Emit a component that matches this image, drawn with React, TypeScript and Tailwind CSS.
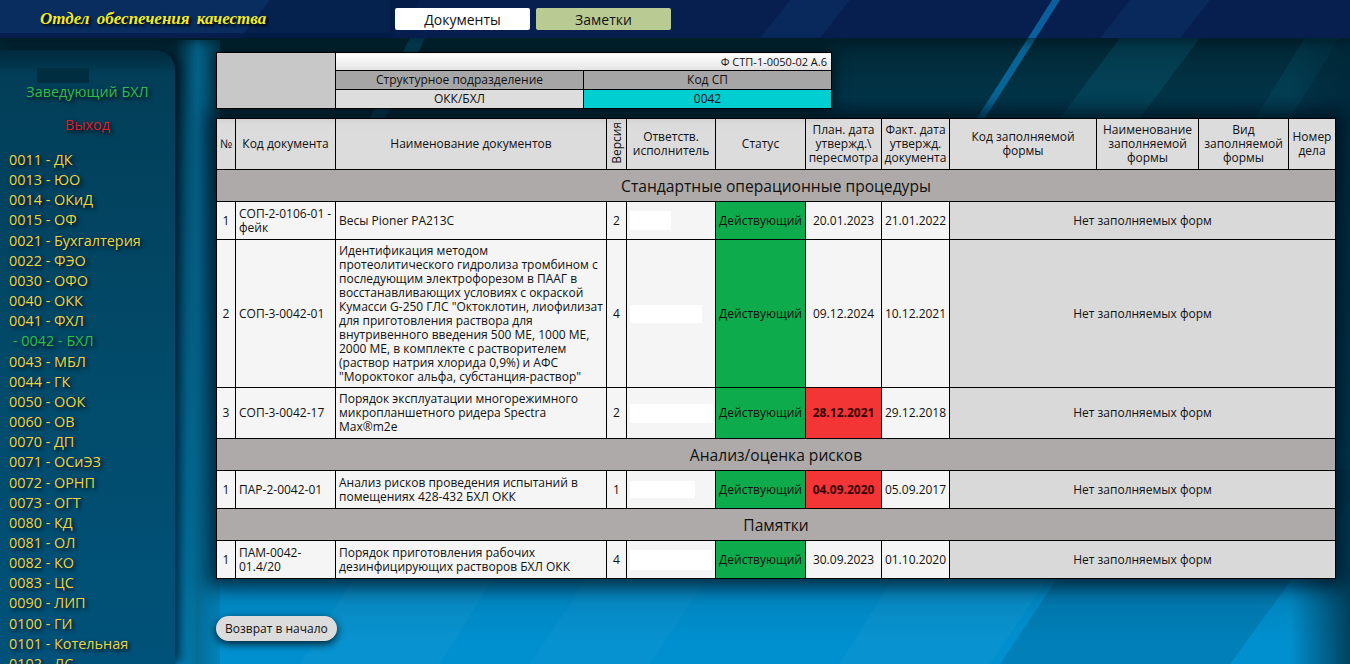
const menu = [
  "0011 - ДК", "0013 - ЮО", "0014 - ОКиД", "0015 - ОФ", "0021 - Бухгалтерия", "0022 - ФЭО", "0030 - ОФО",
  "0040 - ОКК", "0041 - ФХЛ", "- 0042 - БХЛ", "0043 - МБЛ", "0044 - ГК", "0050 - ООК", "0060 - ОВ", "0070 - ДП",
  "0071 - ОСиЭЗ", "0072 - ОРНП", "0073 - ОГТ", "0080 - КД", "0081 - ОЛ", "0082 - КО", "0083 - ЦС", "0090 - ЛИП",
  "0100 - ГИ", "0101 - Котельная", "0102 - ЛС",
];

const colWidths = [19, 100, 271, 20, 89, 90, 76, 68, 147, 102, 90, 47];

const headers = [
  "№", "Код документа", "Наименование документов", "", "Ответств. исполнитель", "Статус",
  "План. дата утвержд.\\ пересмотра", "Факт. дата утвержд. документа", "Код заполняемой формы",
  "Наименование заполняемой формы", "Вид заполняемой формы", "Номер дела",
];

type Doc = {
  num: number;
  code: string;
  name: string;
  ver: number;
  blank: string;
  plan: string;
  fact: string;
  late?: boolean;
  h: string;
};

const sections: { title: string; bold?: boolean; docs: Doc[] }[] = [
  {
    title: "Стандартные операционные процедуры",
    docs: [
      { num: 1, code: "СОП-2-0106-01 - фейк", name: "Весы Pioner PA213C", ver: 2, blank: "w-[41px] h-[19px]", plan: "20.01.2023", fact: "21.01.2022", h: "h-[38px]" },
      {
        num: 2,
        code: "СОП-3-0042-01",
        name: 'Идентификация методом протеолитического гидролиза тромбином с последующим электрофорезом в ПААГ в восстанавливающих условиях с окраской Кумасси G-250 ГЛС "Октоклотин, лиофилизат для приготовления раствора для внутривенного введения 500 МЕ, 1000 МЕ, 2000 МЕ, в комплекте с растворителем (раствор натрия хлорида 0,9%) и АФС "Мороктоког альфа, субстанция-раствор"',
        ver: 4,
        blank: "w-[72px] h-[18px]",
        plan: "09.12.2024",
        fact: "10.12.2021",
        h: "h-[148px]",
      },
      { num: 3, code: "СОП-3-0042-17", name: "Порядок эксплуатации многорежимного микропланшетного ридера Spectra Max®m2e", ver: 2, blank: "w-[83px] h-[19px]", plan: "28.12.2021", fact: "29.12.2018", late: true, h: "h-[51px]" },
    ],
  },
  {
    title: "Анализ/оценка рисков",
    bold: true,
    docs: [
      { num: 1, code: "ПАР-2-0042-01", name: "Анализ рисков проведения испытаний в помещениях 428-432 БХЛ ОКК", ver: 1, blank: "w-[65px] h-[17px]", plan: "04.09.2020", fact: "05.09.2017", late: true, h: "h-[38px]" },
    ],
  },
  {
    title: "Памятки",
    bold: true,
    docs: [
      { num: 1, code: "ПАМ-0042-01.4/20", name: "Порядок приготовления рабочих дезинфицирующих растворов БХЛ ОКК", ver: 4, blank: "w-[82px] h-[20px]", plan: "30.09.2023", fact: "01.10.2020", h: "h-[38px]" },
    ],
  },
];

// wallpaper: diagonal streaks behind everything
function Backdrop() {
  return (
    <svg className="absolute inset-0 h-full w-full pointer-events-none" viewBox="0 0 1350 664" preserveAspectRatio="none">
      <defs>
        <linearGradient id="column" x1="0" y1="0" x2="1" y2="0">
          <stop offset="0" stopColor="#05638a" stopOpacity="0" />
          <stop offset="0.5" stopColor="#05688f" stopOpacity="0.9" />
          <stop offset="1" stopColor="#05688f" stopOpacity="0.3" />
        </linearGradient>
        <linearGradient id="edge" x1="0" y1="0" x2="1" y2="0">
          <stop offset="0" stopColor="#00283a" stopOpacity="0" />
          <stop offset="1" stopColor="#00283a" stopOpacity="0.75" />
        </linearGradient>
      </defs>
      <rect x="175" y="40" width="45" height="624" fill="url(#column)" />
      <polygon points="840,664 960,470 1120,470 990,664" fill="#ffffff" fillOpacity="0.03" />
      <polygon points="1000,664 1130,470 1350,470 1350,500 1230,664" fill="#001f33" fillOpacity="0.14" />
      <polygon points="300,664 420,470 560,470 440,664" fill="#ffffff" fillOpacity="0.03" />
      <polygon points="530,664 660,470 780,470 650,664" fill="#ffffff" fillOpacity="0.025" />
      <polygon points="370,118 410,38 425,38 385,118" fill="#0a6f9c" fillOpacity="0.45" />
      <polygon points="1060,118 1120,38 1200,38 1140,118" fill="#0a6f8c" fillOpacity="0.25" />
      <polygon points="1255,118 1305,38 1340,38 1290,118" fill="#0a6f8c" fillOpacity="0.18" />
      <polygon points="977,118 1028,38 1036,38 985,118" fill="#0b6fa6" fillOpacity="0.85" />
      <rect x="1290" y="40" width="60" height="624" fill="url(#edge)" />
    </svg>
  );
}

function HeaderArt() {
  return (
    <svg className="absolute inset-0 h-full w-full pointer-events-none" viewBox="0 0 1350 38" preserveAspectRatio="none">
      <rect x="0" y="0" width="390" height="33" fill="#0d3d74" fillOpacity="0.45" />
      <polygon points="240,38 270,0 420,0 390,38" fill="#041a44" fillOpacity="0.6" />
      <polygon points="1028,38 1052,0 1060,0 1036,38" fill="#0b5f9c" />
      <polygon points="760,38 790,0 850,0 820,38" fill="#0c3268" fillOpacity="0.5" />
      <polygon points="1100,38 1130,0 1210,0 1180,38" fill="#0c3268" fillOpacity="0.5" />
    </svg>
  );
}

function Sidebar() {
  return (
    <aside className="relative w-[175px] shrink-0 mt-[12px] rounded-tr-[20px] bg-[linear-gradient(to_bottom,#01293b_0%,#023e58_4%,#024a69_50%,#00527a_100%)] shadow-[5px_0_12px_rgba(0,15,30,0.85)]">
      <div className="absolute left-[37px] top-[18px] h-[15px] w-[52px] bg-[#012d40]" />
      <div className="relative pt-[32px] text-center text-[14.4px] leading-[20px] [text-shadow:2px_2px_4px_#000]">
        <p className="text-[#2dbf4e]">Заведующий БХЛ</p>
        <p className="mt-[13px] text-[#d9202c]">Выход</p>
      </div>
      <ul className="relative mt-[15px] pl-[9px] text-[14.4px] leading-[20.16px] text-[#ecd548] [text-shadow:2px_2px_4px_#000]">
        {menu.map((item) => (
          <li key={item} className={item.startsWith("-") ? "pl-[4px] text-[#2dbf4e]" : ""}>
            {item}
          </li>
        ))}
      </ul>
    </aside>
  );
}

function SpCard() {
  return (
    <table className="relative z-10 w-[615px] table-fixed border-collapse border border-black text-[12px] text-[#111] shadow-[0_0_14px_rgba(0,0,0,0.7)]">
      <colgroup>
        <col className="w-[119px]" />
        <col className="w-[248px]" />
        <col className="w-[248px]" />
      </colgroup>
      <tbody>
        <tr className="h-[18px]">
          <td rowSpan={3} className="border border-black bg-[#c8c8c8]" />
          <td colSpan={2} className="border border-black bg-gradient-to-b from-[#ffffff] to-[#e4e4e4] pr-[4px] text-right text-[11px] leading-none">
            Ф СТП-1-0050-02 А.6
          </td>
        </tr>
        <tr className="h-[19px] bg-[#a6a6a6] text-center leading-none">
          <td className="border border-black">Структурное подразделение</td>
          <td className="border border-black">Код СП</td>
        </tr>
        <tr className="h-[19px] text-center leading-none">
          <td className="border border-black bg-[#dddddd]">ОКК/БХЛ</td>
          <td className="border border-black bg-[#00ced1]">0042</td>
        </tr>
      </tbody>
    </table>
  );
}

function DocsTable() {
  return (
    <table className="mt-[9px] w-[1119px] table-fixed border-collapse border border-black text-[12px] leading-[14px] text-[#111] shadow-[0_0_18px_8px_rgba(0,10,20,0.75)]">
      <colgroup>
        {colWidths.map((w, i) => (
          <col key={i} style={{ width: w }} />
        ))}
      </colgroup>
      <thead>
        <tr className="h-[51px] bg-[#dcdcdc] text-center">
          {headers.map((h, i) => (
            <th key={i} className={`border border-black p-0 font-normal leading-[14px] ${i === 8 ? "px-[20px]" : ""}`}>
              {i === 3 ? (
                <span className="inline-block [writing-mode:vertical-rl] rotate-180 text-[12px]">Версия</span>
              ) : (
                h
              )}
            </th>
          ))}
        </tr>
      </thead>
      <tbody>
        {sections.map((section) => (
          <Section key={section.title} title={section.title} bold={section.bold} docs={section.docs} />
        ))}
      </tbody>
    </table>
  );
}

function Section({ title, bold, docs }: { title: string; bold?: boolean; docs: Doc[] }) {
  return (
    <>
      <tr className="h-[32px] bg-[#aeaaaa]">
        <td colSpan={12} className={`border border-black text-center text-[15.6px] ${bold ? "font-medium" : ""}`}>
          {title}
        </td>
      </tr>
      {docs.map((doc) => (
        <tr key={doc.code} className={`${doc.h} bg-[#f5f5f5]`}>
          <td className="border border-black text-center">{doc.num}</td>
          <td className="border border-black px-[3px]">{doc.code}</td>
          <td className="border border-black px-[3px]">{doc.name}</td>
          <td className="border border-black text-center">{doc.ver}</td>
          <td className="border border-black px-[3px]">
            <div className={`${doc.blank} bg-white`} />
          </td>
          <td className="border border-black bg-[#0dab4c] text-center">Действующий</td>
          <td className={`border border-black text-center ${doc.late ? "bg-[#f43535] font-bold text-[#3a0000]" : ""}`}>{doc.plan}</td>
          <td className="border border-black text-center">{doc.fact}</td>
          <td colSpan={4} className="border border-black bg-[#d9d9d9] text-center">
            Нет заполняемых форм
          </td>
        </tr>
      ))}
    </>
  );
}

export default function App() {
  return (
    <div className="relative flex h-[664px] w-[1350px] flex-col overflow-hidden bg-[linear-gradient(to_bottom,#012633_6%,#023f58_20%,#03608a_55%,#0078ac_80%,#0090cf_97%)] font-['Open_Sans','Noto_Sans',sans-serif]">
      <Backdrop />
      <header className="relative flex h-[38px] shrink-0 items-center bg-[#061f4f] shadow-[0_4px_10px_rgba(0,20,30,0.6)]">
        <HeaderArt />
        <h1 className="relative ml-[40px] w-[355px] font-['Liberation_Serif',serif] text-[17px] font-bold italic [word-spacing:3px] text-[#f1ea28] [text-shadow:2px_2px_3px_#000]">
          Отдел обеспечения качества
        </h1>
        <nav className="relative flex gap-[6px] text-[14px] text-[#111]">
          <button className="h-[22px] w-[135px] rounded-[2px] bg-white">Документы</button>
          <button className="h-[22px] w-[135px] rounded-[2px] bg-[#b9cb92]">Заметки</button>
        </nav>
      </header>
      <div className="relative flex min-h-0 flex-1">
        <Sidebar />
        <main className="ml-[41px] pt-[14px]">
          <SpCard />
          <DocsTable />
          <button className="mt-[37px] h-[25px] rounded-full bg-[#dcdcdc] px-[9px] text-[12px] text-[#111] shadow-[0_3px_8px_rgba(0,0,0,0.8)]">
            Возврат в начало
          </button>
        </main>
      </div>
    </div>
  );
}
